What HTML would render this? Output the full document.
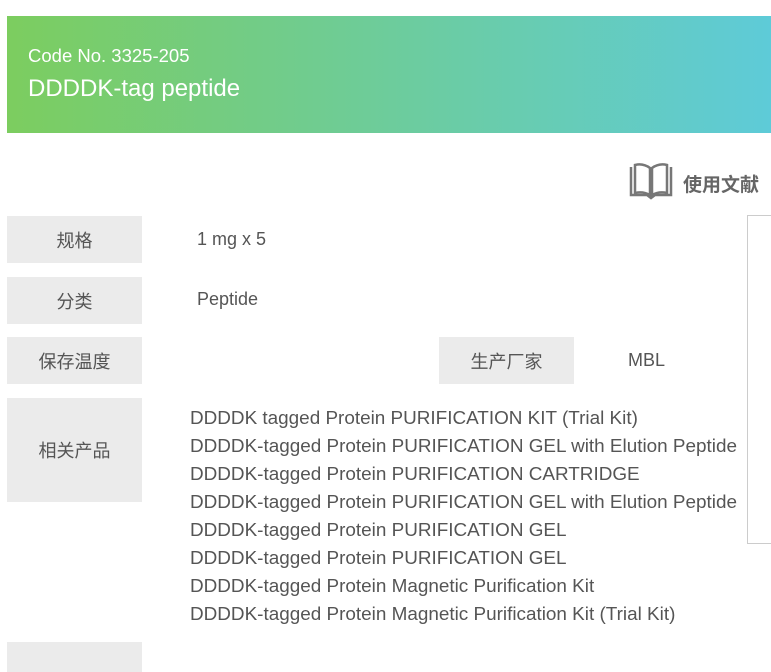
<!DOCTYPE html>
<html><head><meta charset="utf-8"><style>
body{margin:0;width:771px;height:664px;overflow:hidden;background:#fff;font-family:"Liberation Sans","Noto Sans CJK SC",sans-serif;color:#555;position:relative}
.ban{position:absolute;left:7px;top:16px;width:764px;height:117px;background:linear-gradient(90deg,#7ccd5f,#5ecbd8)}
.ban .c{position:absolute;left:21px;top:29px;color:#fff;font-size:18.5px}
.ban .t{position:absolute;left:21px;top:59px;color:#fff;font-size:24px}
.lab{position:absolute;left:7px;width:135px;background:#ebebeb;display:flex;align-items:center;justify-content:center;font-size:18px;color:#555}
.v{position:absolute;font-size:18px;color:#555}
.rel{position:absolute;left:190px;top:405px;font-size:18.9px;line-height:28px;color:#555}
.box{position:absolute;left:747px;top:215px;width:40px;height:327px;border:1px solid #ccc}
</style></head><body>
<div class="ban"><div class="c">Code No. 3325-205</div><div class="t">DDDDK-tag peptide</div></div>
<svg style="position:absolute;left:628px;top:161px" width="46" height="40" viewBox="0 0 46 40"><g fill="none" stroke="#777" stroke-width="2.5"><path d="M3 6v28h16l4 3 4-3h16V6"/><path d="M7 4q8-2 15 3v27q-7-4-15-2z"/><path d="M39 4q-8-2-15 3v27q7-4 15-2z"/></g></svg>
<div class="v" style="left:683px;top:170px;font-weight:bold;font-size:19px;color:#666">使用文献</div>
<div class="box"></div>
<div class="lab" style="top:216px;height:47px">规格</div>
<div class="v" style="left:197px;top:229px">1 mg x 5</div>
<div class="lab" style="top:277px;height:47px">分类</div>
<div class="v" style="left:197px;top:289px">Peptide</div>
<div class="lab" style="top:337px;height:47px">保存温度</div>
<div class="lab" style="top:337px;height:47px;left:439px">生产厂家</div>
<div class="v" style="left:628px;top:350px">MBL</div>
<div class="lab" style="top:398px;height:104px">相关产品</div>
<div class="rel">DDDDK tagged Protein PURIFICATION KIT (Trial Kit)<br>DDDDK-tagged Protein PURIFICATION GEL with Elution Peptide<br>DDDDK-tagged Protein PURIFICATION CARTRIDGE<br>DDDDK-tagged Protein PURIFICATION GEL with Elution Peptide<br>DDDDK-tagged Protein PURIFICATION GEL<br>DDDDK-tagged Protein PURIFICATION GEL<br>DDDDK-tagged Protein Magnetic Purification Kit<br>DDDDK-tagged Protein Magnetic Purification Kit (Trial Kit)</div>
<div class="lab" style="top:642px;height:30px"></div>
</body></html>
